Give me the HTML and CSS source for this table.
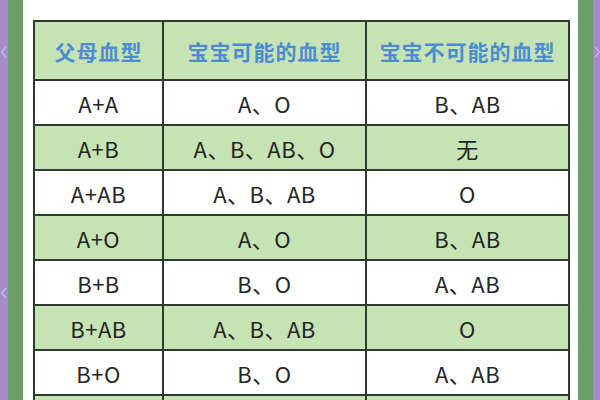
FILE: index.html
```html
<!DOCTYPE html>
<html lang="zh">
<head>
<meta charset="utf-8">
<link rel="stylesheet" href="styles.css">
</head>
<body>
<div class="frame">
  <div class="purple left">
    <svg class="chev c1" width="8" height="12" viewBox="0 0 8 12"><path d="M6 1 L1.5 6 L6 11" fill="none" stroke="#c9b8ea" stroke-width="1.2"/></svg>
    <svg class="chev c2" width="8" height="12" viewBox="0 0 8 12"><path d="M6 1 L1.5 6 L6 11" fill="none" stroke="#c9b8ea" stroke-width="1.2"/></svg>
  </div>
  <div class="green"></div>
  <div class="main">
    <table class="blood">
      <thead>
        <tr><th class="c-a">父母血型</th><th>宝宝可能的血型</th><th>宝宝不可能的血型</th></tr>
      </thead>
      <tbody>
        <tr><td>A+A</td><td>A、O</td><td>B、AB</td></tr>
        <tr class="alt"><td>A+B</td><td>A、B、AB、O</td><td>无</td></tr>
        <tr><td>A+AB</td><td>A、B、AB</td><td>O</td></tr>
        <tr class="alt"><td>A+O</td><td>A、O</td><td>B、AB</td></tr>
        <tr><td>B+B</td><td>B、O</td><td>A、AB</td></tr>
        <tr class="alt"><td>B+AB</td><td>A、B、AB</td><td>O</td></tr>
        <tr><td>B+O</td><td>B、O</td><td>A、AB</td></tr>
        <tr class="alt"><td></td><td></td><td></td></tr>
      </tbody>
    </table>
  </div>
  <div class="green"></div>
  <div class="purple right">
    <svg class="chev c1" width="8" height="12" viewBox="0 0 8 12"><path d="M2 1 L6.5 6 L2 11" fill="none" stroke="#c9b8ea" stroke-width="1.2"/></svg>
  </div>
</div>
</body>
</html>
```

FILE: styles.css
```css
html, body {
  margin: 0;
  padding: 0;
  width: 600px;
  height: 400px;
  overflow: hidden;
  background: #ffffff;
}
.frame {
  display: flex;
  width: 600px;
  height: 400px;
}
.purple {
  background: #a48ccb;
  display: flex;
  flex-direction: column;
  align-items: center;
}
.purple.left { width: 8px; }
.purple.right { width: 7px; }
.chev { display: block; flex: none; }
.left .c1 { margin-top: 46px; }
.left .c2 { margin-top: 229px; }
.right .c1 { margin-top: 46px; }
.green {
  width: 15px;
  background: #6a9e65;
}
.main {
  flex: 1;
  background: #ffffff;
  padding: 20px 0 0 10px;
  overflow: hidden;
}
.blood {
  border-collapse: collapse;
  width: 537px;
  table-layout: fixed;
  font-family: "Noto Sans CJK SC", "Noto Sans", sans-serif;
}
.blood th, .blood td {
  border: 2px solid #2e3a2e;
  text-align: center;
  padding: 0;
}
.blood th {
  height: 57px;
  background: #c6e3b3;
  color: #4d8bd2;
  font-size: 21px;
  font-weight: 700;
  letter-spacing: 1px;
}
.blood th.c-a { width: 127px; }
.blood td {
  height: 43px;
  font-size: 22px;
  letter-spacing: 0.5px;
  color: #252525;
  font-weight: 400;
}
.blood tr.alt td { background: #c6e3b3; }
```
